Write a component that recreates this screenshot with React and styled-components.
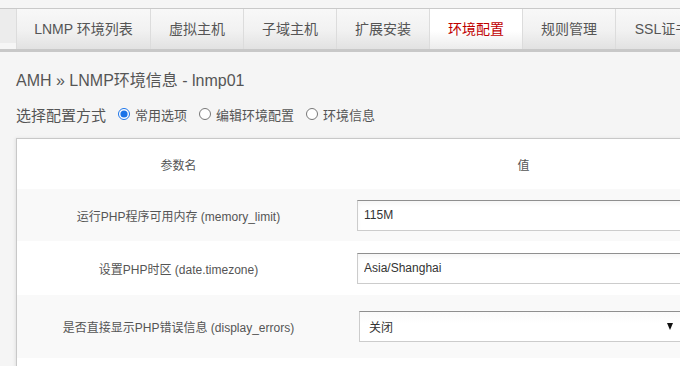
import React from "react";
import styled, { createGlobalStyle } from "styled-components";

const GlobalStyle = createGlobalStyle`
  html, body {
    margin: 0;
    padding: 0;
    background: #f5f5f5;
    overflow: hidden;
  }
  body {
    font-family: "Liberation Sans", "Noto Sans CJK SC", sans-serif;
    color: #555;
  }
`;

const Page = styled.div`
  width: 680px;
  height: 366px;
  overflow: hidden;
  padding-top: 8px;
  box-sizing: border-box;
`;

const TabBar = styled.div`
  display: flex;
  border-top: 1px solid #c9c9c9;
  border-bottom: 3px solid #c8c8c8;
  height: 40px;
  width: 900px;
  background: linear-gradient(#ececec 0, #ececec 34px, #f6f6f6 34px, #f6f6f6 40px);
`;

const Tab = styled.div`
  flex: 0 0 ${(p) => p.$w}px;
  box-sizing: border-box;
  border-left: 1px solid #dcdcdc;
  display: flex;
  align-items: center;
  justify-content: center;
  font-size: 14px;
  padding-bottom: 2px;
  white-space: nowrap;
  color: ${(p) => (p.$active ? "#c00000" : "#555")};
  background: ${(p) =>
    p.$active
      ? "linear-gradient(#ffffff 0%, #ffffff 55%, #ececec 100%)"
      : "linear-gradient(#f8f8f8 0%, #f1f1f1 55%, #e2e2e2 100%)"};
`;

const Spacer = styled.div`
  flex: 0 0 16px;
`;

const Title = styled.h2`
  margin: 0;
  padding: 19px 0 0 16px;
  font-size: 16px;
  font-weight: normal;
  color: #555;
  line-height: 20px;
`;

const ModeRow = styled.div`
  display: flex;
  align-items: center;
  padding: 13px 0 0 16px;
  height: 20px;
  font-size: 13px;
  color: #555;
`;

const ModeLabel = styled.span`
  font-size: 15px;
`;

const Radio = styled.label`
  display: flex;
  align-items: center;
  margin-left: 12px;

  input {
    margin: 0 5px 0 0;
    width: 12px;
    height: 12px;
    accent-color: #1a73e8;
  }
`;

const Panel = styled.div`
  margin: 14px 0 0 16px;
  width: 690px;
  background: #fff;
  border-top: 1px solid #c8c8c8;
  border-left: 1px solid #c8c8c8;
  box-shadow: -1px 0 3px rgba(0, 0, 0, 0.08);
`;

const Table = styled.table`
  border-collapse: collapse;
  width: 100%;
  table-layout: fixed;
`;

const Row = styled.tr`
  background: ${(p) => (p.$alt ? "#f9f9f9" : "#fff")};
  height: ${(p) => p.$h}px;
`;

const Head = styled.th`
  font-weight: normal;
  font-size: 12px;
  color: #555;
  text-align: center;
  padding: 0;
  width: ${(p) => (p.$w ? `${p.$w}px` : "auto")};
`;

const NameCell = styled.td`
  font-size: 12px;
  color: #555;
  text-align: center;
  padding: 0;
`;

const ValueCell = styled.td`
  padding: 0 0 0 ${(p) => p.$pl}px;
`;

const Input = styled.input`
  display: block;
  box-sizing: border-box;
  width: 345px;
  height: 31px;
  border: 1px solid #ccc;
  border-top-color: #8f8f8f;
  box-shadow: inset 0 3px 4px rgba(0, 0, 0, 0.04);
  font-family: "Liberation Sans", "Noto Sans CJK SC", sans-serif;
  font-size: 12px;
  color: #333;
  padding: 0 6px;
  outline: none;
`;

const SelectBox = styled.div`
  box-sizing: border-box;
  width: 345px;
  height: 31px;
  border: 1px solid #ccc;
  border-top-color: #8f8f8f;
  background: linear-gradient(#fafafa, #fff 40%);
  display: flex;
  align-items: center;
  justify-content: space-between;
  padding: 0 0 0 9px;
  font-size: 12px;
  color: #333;
`;

const Arrow = styled.span`
  width: 0;
  height: 0;
  border-left: 3.5px solid transparent;
  border-right: 3.5px solid transparent;
  border-top: 7px solid #111;
  margin-right: 30px;
`;

const tabs = [
  { t: "LNMP 环境列表", w: 134 },
  { t: "虚拟主机", w: 93 },
  { t: "子域主机", w: 93 },
  { t: "扩展安装", w: 93 },
  { t: "环境配置", w: 93, active: true },
  { t: "规则管理", w: 93 },
  { t: "SSL证书", w: 93 },
];

export default function App() {
  return (
    <Page>
      <GlobalStyle />
      <TabBar>
        <Spacer />
        {tabs.map((tab) => (
          <Tab key={tab.t} $w={tab.w} $active={tab.active}>
            {tab.t}
          </Tab>
        ))}
      </TabBar>
      <Title>AMH » LNMP环境信息 - lnmp01</Title>
      <ModeRow>
        <ModeLabel>选择配置方式</ModeLabel>
        <Radio>
          <input type="radio" name="mode" defaultChecked />
          常用选项
        </Radio>
        <Radio>
          <input type="radio" name="mode" />
          编辑环境配置
        </Radio>
        <Radio>
          <input type="radio" name="mode" />
          环境信息
        </Radio>
      </ModeRow>
      <Panel>
        <Table>
          <tbody>
            <Row $h={50}>
              <Head $w={323}>参数名</Head>
              <Head>值</Head>
            </Row>
            <Row $alt $h={52}>
              <NameCell>运行PHP程序可用内存 (memory_limit)</NameCell>
              <ValueCell $pl={17}>
                <Input defaultValue="115M" />
              </ValueCell>
            </Row>
            <Row $h={54}>
              <NameCell>设置PHP时区 (date.timezone)</NameCell>
              <ValueCell $pl={17}>
                <Input defaultValue="Asia/Shanghai" />
              </ValueCell>
            </Row>
            <Row $alt $h={63}>
              <NameCell>是否直接显示PHP错误信息 (display_errors)</NameCell>
              <ValueCell $pl={19}>
                <SelectBox>
                  <span>关闭</span>
                  <Arrow />
                </SelectBox>
              </ValueCell>
            </Row>
            <Row $h={52}>
              <NameCell />
              <ValueCell $pl={17} />
            </Row>
          </tbody>
        </Table>
      </Panel>
    </Page>
  );
}
